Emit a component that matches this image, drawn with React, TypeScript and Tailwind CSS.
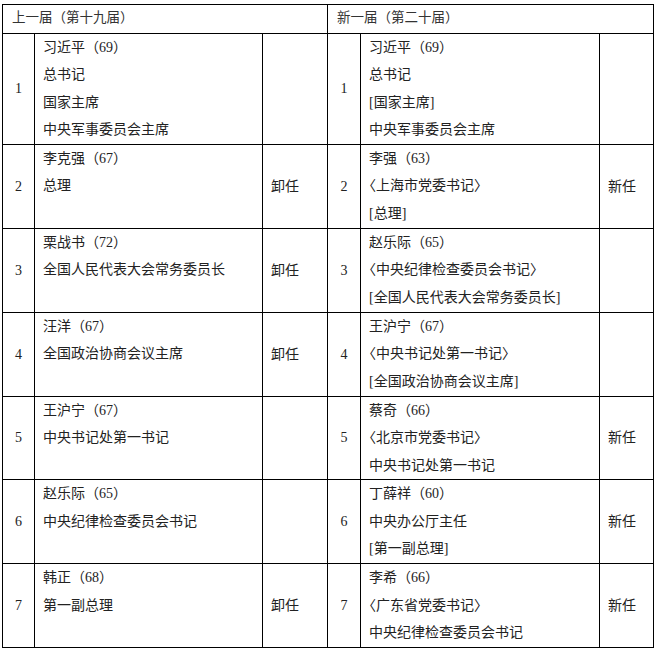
const font = { fontFamily: '"Liberation Serif", "Noto Sans CJK SC", serif' };

type Row = {
  no: number;
  oldLines: string[];
  oldStatus: string;
  newLines: string[];
  newStatus: string;
  h: string;
};

const rows: Row[] = [
  {
    no: 1,
    oldLines: ['习近平（69）', '总书记', '国家主席', '中央军事委员会主席'],
    oldStatus: '',
    newLines: ['习近平（69）', '总书记', '[国家主席]', '中央军事委员会主席'],
    newStatus: '',
    h: 'h-[111px]',
  },
  {
    no: 2,
    oldLines: ['李克强（67）', '总理'],
    oldStatus: '卸任',
    newLines: ['李强（63）', '〈上海市党委书记〉', '[总理]'],
    newStatus: '新任',
    h: 'h-[84px]',
  },
  {
    no: 3,
    oldLines: ['栗战书（72）', '全国人民代表大会常务委员长'],
    oldStatus: '卸任',
    newLines: ['赵乐际（65）', '〈中央纪律检查委员会书记〉', '[全国人民代表大会常务委员长]'],
    newStatus: '',
    h: 'h-[84px]',
  },
  {
    no: 4,
    oldLines: ['汪洋（67）', '全国政治协商会议主席'],
    oldStatus: '卸任',
    newLines: ['王沪宁（67）', '〈中央书记处第一书记〉', '[全国政治协商会议主席]'],
    newStatus: '',
    h: 'h-[84px]',
  },
  {
    no: 5,
    oldLines: ['王沪宁（67）', '中央书记处第一书记'],
    oldStatus: '',
    newLines: ['蔡奇（66）', '〈北京市党委书记〉', '中央书记处第一书记'],
    newStatus: '新任',
    h: 'h-[83px]',
  },
  {
    no: 6,
    oldLines: ['赵乐际（65）', '中央纪律检查委员会书记'],
    oldStatus: '',
    newLines: ['丁薛祥（60）', '中央办公厅主任', '[第一副总理]'],
    newStatus: '新任',
    h: 'h-[84px]',
  },
  {
    no: 7,
    oldLines: ['韩正（68）', '第一副总理'],
    oldStatus: '卸任',
    newLines: ['李希（66）', '〈广东省党委书记〉', '中央纪律检查委员会书记'],
    newStatus: '新任',
    h: 'h-[83px]',
  },
];

function Line({ text }: { text: string }) {
  // full-width 〈 sits in the right half of its cell; pull it left so the ink starts at the padding
  if (text.startsWith('〈')) {
    return (
      <>
        <span className="ml-[-7px]">〈</span>
        {text.slice(1)}
      </>
    );
  }
  return <>{text}</>;
}

function Lines({ lines }: { lines: string[] }) {
  return (
    <div className="flex flex-col">
      {lines.map((l, i) => (
        <div key={i} className="h-[27.5px] leading-[27.5px] whitespace-nowrap">
          <Line text={l} />
        </div>
      ))}
    </div>
  );
}

export default function App() {
  const cell = 'border border-black';
  return (
    <div className="min-h-screen bg-white pl-[2px] pt-[3.5px] text-[#222]" style={font}>
      <table className="table-fixed border-collapse w-[651px] text-[14px]">
        <colgroup>
          <col className="w-[32px]" />
          <col className="w-[228px]" />
          <col className="w-[65px]" />
          <col className="w-[33px]" />
          <col className="w-[239px]" />
          <col className="w-[54px]" />
        </colgroup>
        <thead>
          <tr className="h-[29px]">
            <th colSpan={3} className={`${cell} text-left font-normal pl-[9px] text-[13.5px] text-[#333]`}>
              上一届（第十九届）
            </th>
            <th colSpan={3} className={`${cell} text-left font-normal pl-[9px] text-[13.5px] text-[#333]`}>
              新一届（第二十届）
            </th>
          </tr>
        </thead>
        <tbody>
          {rows.map((r) => (
            <tr key={r.no} className={r.h}>
              <td className={`${cell} text-center align-middle`}>{r.no}</td>
              <td className={`${cell} align-top pl-[8px]`}>
                <Lines lines={r.oldLines} />
              </td>
              <td className={`${cell} align-middle pl-[8px]`}>{r.oldStatus}</td>
              <td className={`${cell} text-center align-middle`}>{r.no}</td>
              <td className={`${cell} align-top pl-[8px]`}>
                <Lines lines={r.newLines} />
              </td>
              <td className={`${cell} align-middle pl-[8px]`}>{r.newStatus}</td>
            </tr>
          ))}
        </tbody>
      </table>
    </div>
  );
}
